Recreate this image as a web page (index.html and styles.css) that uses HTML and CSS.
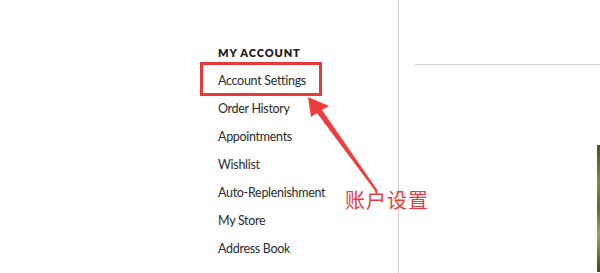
FILE: index.html
```html
<!DOCTYPE html>
<html lang="en">
  <head>
    <meta charset="UTF-8" />
    <meta name="viewport" content="width=device-width, initial-scale=1.0" />
    <title>My Account</title>
    <link rel="stylesheet" href="styles.css">
  </head>
  <body>
    <div class="page">
      <aside class="sidebar">
        <h4 class="menu-title">MY ACCOUNT</h4>
        <ul class="menu">
          <li><a href="#">Account Settings</a></li>
          <li><a href="#">Order History</a></li>
          <li><a href="#">Appointments</a></li>
          <li><a href="#">Wishlist</a></li>
          <li><a href="#">Auto-Replenishment</a></li>
          <li><a href="#">My Store</a></li>
          <li><a href="#">Address Book</a></li>
        </ul>
      </aside>
      <main class="content">
        <div class="rule"></div>
        <div class="photo-row">
          <div class="photo"></div>
        </div>
      </main>
    </div>

    <!-- annotation overlay -->
    <div class="mark-box"></div>
    <svg class="mark-arrow" width="600" height="273" viewBox="0 0 600 273">
      <polygon points="308,97 329,106 322,110 378,191 376,192 317,113 311,117" fill="#f03c3c" />
    </svg>
    <div class="mark-label">账户设置</div>
  </body>
</html>
```

FILE: styles.css
```css
body {
    margin: 0;
    padding: 0;
    background: #fff;
    font-family: Lato, 'Noto Sans', sans-serif;
    color: #222;
    overflow: hidden;
}

.page {
    display: flex;
    height: 273px;
}

.sidebar {
    width: 180px;
    padding: 39px 0 0 218px;
    border-right: 1px solid #cfcfcf;
}

.menu-title {
    margin: 0;
    height: 28px;
    line-height: 28px;
    font-size: 11px;
    font-weight: 800;
    letter-spacing: 0.9px;
    color: #1c1c1c;
}

.menu {
    list-style: none;
    margin: 0;
    padding: 0;
}

.menu li {
    height: 28px;
    line-height: 28px;
    font-size: 12.5px;
    letter-spacing: -0.3px;
}

.menu a {
    color: #2a2a2a;
    text-decoration: none;
}

.content {
    flex: 1;
    padding-top: 64px;
}

.rule {
    margin-left: 16px;
    border-top: 1px solid #d2d2d2;
}

.photo-row {
    display: flex;
    justify-content: flex-end;
    margin-top: 80px;
}

.photo {
    width: 3px;
    height: 127px;
    background: linear-gradient(to bottom, #4a5220, #7d8a3c 30%, #5d6a2a 50%, #9aa65a 70%, #3f4a1c);
}

.mark-box {
    position: absolute;
    left: 200px;
    top: 62px;
    width: 116px;
    height: 28px;
    border: 3px solid #e8383a;
}

.mark-arrow {
    position: absolute;
    left: 0;
    top: 0;
}

.mark-label {
    position: absolute;
    left: 345px;
    top: 188px;
    font-family: 'Noto Sans CJK SC', sans-serif;
    font-size: 20px;
    line-height: 24px;
    color: #e83c3c;
    letter-spacing: 1px;
}
```
